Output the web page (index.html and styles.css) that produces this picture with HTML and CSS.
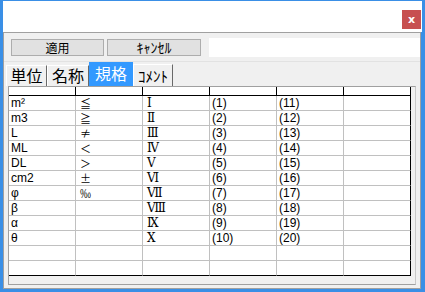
FILE: index.html
```html
<!DOCTYPE html>
<html lang="ja">
<head>
  <meta charset="UTF-8">
  <title>規格</title>
  <link rel="stylesheet" href="styles.css">
</head>
<body>

  <div class="window">
    <div class="titlebar">
      <span class="close">x</span>
    </div>

    <div class="panel">
      <!-- Toolbar -->
      <div class="toolbar">
        <button class="btn">適用</button>
        <button class="btn btn-cancel">ｷｬﾝｾﾙ</button>
        <div class="field"></div>
      </div>

      <!-- Tabs -->
      <div class="tabs">
        <div class="tab tab-unit">単位</div>
        <div class="tab tab-name">名称</div>
        <div class="tab tab-active">規格</div>
        <div class="tab tab-small">ｺﾒﾝﾄ</div>
      </div>

      <!-- Grid -->
      <div class="grid-frame">
        <table class="grid">
          <thead>
            <tr><th></th><th></th><th></th><th></th><th></th><th></th></tr>
          </thead>
          <tbody id="gridBody"></tbody>
        </table>
      </div>
    </div>
  </div>

  <script>
    const rows = [
      ['m²', '≦', 'Ⅰ', '(1)', '(11)'],
      ['m3', '≧', 'Ⅱ', '(2)', '(12)'],
      ['L', '≠', 'Ⅲ', '(3)', '(13)'],
      ['ML', '＜', 'Ⅳ', '(4)', '(14)'],
      ['DL', '＞', 'Ⅴ', '(5)', '(15)'],
      ['cm2', '±', 'Ⅵ', '(6)', '(16)'],
      ['φ', '‰', 'Ⅶ', '(7)', '(17)'],
      ['β', '', 'Ⅷ', '(8)', '(18)'],
      ['α', '', 'Ⅸ', '(9)', '(19)'],
      ['θ', '', 'Ⅹ', '(10)', '(20)'],
      ['', '', '', '', ''],
      ['', '', '', '', '']
    ];

    document.getElementById('gridBody').innerHTML = rows.map(
      r => '<tr>' + r.map(v => `<td>${v}</td>`).join('') + '<td></td></tr>'
    ).join('');
  </script>

</body>
</html>
```

FILE: styles.css
```css
body {
  margin: 0;
  font-family: "Noto Sans CJK JP", sans-serif;
}
.window {
  width: 425px;
  height: 292px;
  box-sizing: border-box;
  background-color: #3a8fe6;
  padding: 1px 3px 3px 3px;
  display: flex;
  flex-direction: column;
}
.titlebar {
  height: 31px;
  box-sizing: border-box;
  background: #fff;
  display: flex;
  justify-content: flex-end;
  align-items: flex-start;
  padding: 9px 1px 0 0;
}
.close {
  width: 19px;
  height: 19px;
  background-color: #c75050;
  color: #fff;
  font: bold 11px "DejaVu Sans", sans-serif;
  display: flex;
  align-items: center;
  justify-content: center;
}

.panel {
  flex: 1;
  background: #f0f0f0;
  border: 1px solid #a0a0a0;
  margin-right: 1px;
  display: flex;
  flex-direction: column;
  min-height: 0;
}

/* Toolbar */
.toolbar {
  height: 29px;
  box-sizing: border-box;
  padding: 0 0 0 7px;
  display: flex;
  align-items: center;
  border-bottom: 1px solid #e2e2e2;
}
.btn {
  width: 93px;
  height: 17px;
  box-sizing: border-box;
  margin: 0 3px 0 0;
  padding: 0;
  background: #e1e1e1;
  border: 1px solid #adadad;
  font-family: "Noto Sans CJK JP", sans-serif;
  font-size: 12px;
  line-height: 15px;
  color: #000;
}
.btn-cancel {
  width: 94px;
  margin-right: 8px;
  font-size: 14px;
}
.field {
  flex: 1;
  height: 19px;
  background: #fff;
}

/* Tabs */
.tabs {
  height: 24px;
  display: flex;
  align-items: flex-end;
  padding-left: 2px;
}
.tab {
  height: 21px;
  box-sizing: border-box;
  border-top: 1px solid #fff;
  border-left: 1px solid #fff;
  border-right: 1px solid #696969;
  font-size: 16px;
  line-height: 19px;
  text-align: center;
  color: #000;
}
.tab-unit { width: 41px; }
.tab-name { width: 42px; }
.tab-active {
  width: 44px;
  height: 24px;
  border: none;
  background: #3399ff;
  color: #fff;
  line-height: 22px;
}
.tab-small {
  width: 40px;
  height: 22px;
  font-size: 15px;
  line-height: 21px;
}

/* Grid */
.grid-frame {
  margin: 0 4px 3px 4px;
  flex: 1;
  border: 1px solid #a0a0a0;
  border-right-color: #c8c8c8;
  background: #f0f0f0;
}
.grid {
  border-collapse: separate;
  border-spacing: 0;
  table-layout: fixed;
  width: 402px;
  background: #fff;
}
.grid th,
.grid td {
  width: 66px;
  padding: 0 0 0 2px;
  box-sizing: border-box;
  white-space: nowrap;
}
.grid th {
  height: 9px;
  border-right: 1px solid #000;
  border-bottom: 1px solid #000;
  background: #fff;
}
.grid td {
  height: 15px;
  border-right: 1px solid #c0c0c0;
  border-bottom: 1px solid #c0c0c0;
  font-family: "Liberation Sans", "Noto Sans CJK JP", sans-serif;
  font-size: 12px;
  line-height: 14px;
  color: #000;
}
.grid td:nth-child(2) {
  font-family: "Noto Sans CJK JP", sans-serif;
  font-size: 11px;
  line-height: 13px;
  padding-left: 4px;
}
.grid td:nth-child(3) {
  font-family: "DejaVu Serif", "Noto Sans CJK JP", serif;
  padding-left: 4px;
}
.grid td:last-child {
  border-right-color: #000;
}
.grid tr:last-child td {
  border-bottom-color: #000;
}
```
